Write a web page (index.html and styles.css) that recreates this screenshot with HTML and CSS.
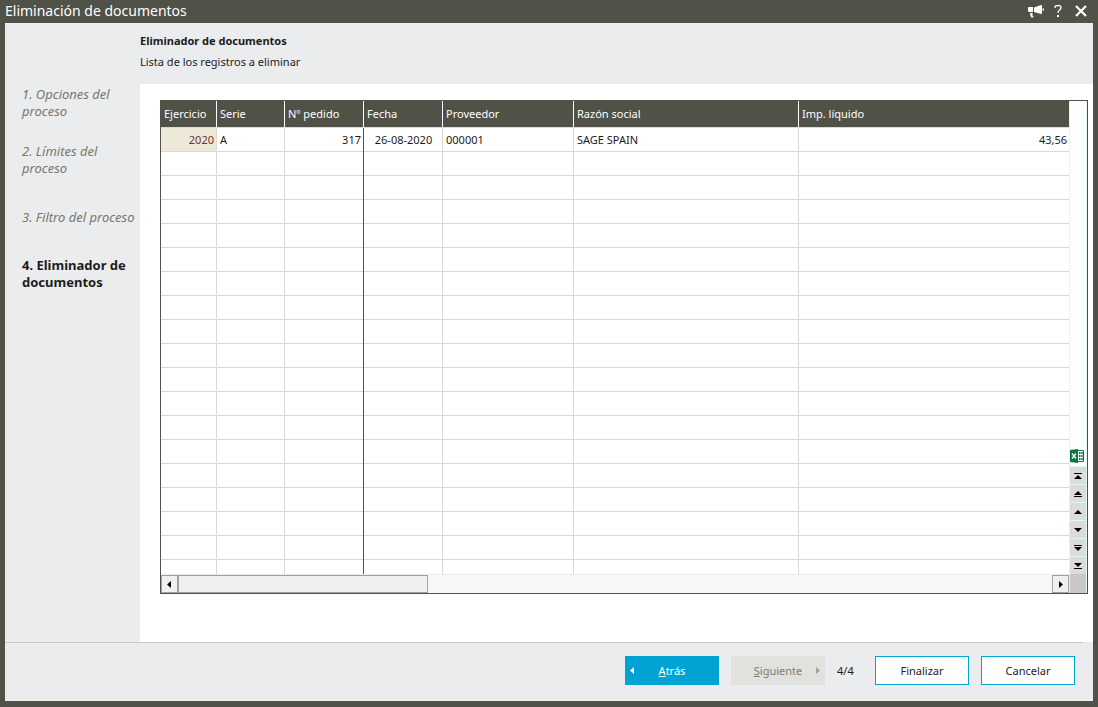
FILE: index.html
```html
<!DOCTYPE html>
<html lang="es">
<head>
<meta charset="utf-8">
<title>Eliminación de documentos</title>
<link rel="stylesheet" href="styles.css">
</head>
<body>
<div class="window">
  <header class="titlebar">
    <h1 class="titlebar-text">Eliminación de documentos</h1>
    <div class="titlebar-tools">
      <button class="tool" type="button" aria-label="Avisos"><svg width="18" height="16" viewBox="0 0 18 16" fill="#fff"><path d="M1.500 4H6v5H1.500L1 8V5zM7 4.500L14 2l1 .5v8l-1 .5-7-2zM15.500 5.500h1.500v2h-1.500zM3 10h2.500v2.500l1 1-.5 1H4.500L3.500 13z"/></svg></button>
      <button class="tool" type="button" aria-label="Ayuda"><svg width="10" height="14" viewBox="0 0 10 14" fill="none" stroke="#fff" stroke-width="1.300"><path d="M2 4V3q0-1.500 3-1.500t3 2q0 1.500-1.500 2.500T5 9"/><path d="M5 11v2" stroke-width="2"/></svg></button>
      <button class="tool" type="button" aria-label="Cerrar"><svg width="12" height="12" viewBox="0 0 12 12" stroke="#fff" stroke-width="2.200"><path d="M1 1l10 10M11 1L1 11"/></svg></button>
    </div>
  </header>
  <div class="wizard">
    <nav class="steps">
      <ol class="step-list">
        <li class="step">1. Opciones del proceso</li>
        <li class="step">2. Límites del proceso</li>
        <li class="step">3. Filtro del proceso</li>
        <li class="step step-current">4. Eliminador de documentos</li>
      </ol>
    </nav>
    <main class="page">
      <div class="page-head">
        <h2 class="page-title">Eliminador de documentos</h2>
        <p class="page-subtitle">Lista de los registros a eliminar</p>
      </div>
      <div class="page-body">
        <div class="grid">
          <div class="grid-main">
            <div class="grid-rows">
              <table class="records">
                <colgroup><col class="c-year"><col class="c-series"><col class="c-order"><col class="c-date"><col class="c-vendor"><col class="c-name"><col></colgroup>
                <thead><tr><th>Ejercicio</th><th>Serie</th><th>Nº pedido</th><th>Fecha</th><th>Proveedor</th><th>Razón social</th><th>Imp. líquido</th></tr></thead>
                <tbody>
                  <tr><td class="num selected">2020</td><td>A</td><td class="num">317</td><td class="center">26-08-2020</td><td>000001</td><td>SAGE SPAIN</td><td class="num">43,56</td></tr>
                  <tr><td></td><td></td><td></td><td></td><td></td><td></td><td></td></tr>
                  <tr><td></td><td></td><td></td><td></td><td></td><td></td><td></td></tr>
                  <tr><td></td><td></td><td></td><td></td><td></td><td></td><td></td></tr>
                  <tr><td></td><td></td><td></td><td></td><td></td><td></td><td></td></tr>
                  <tr><td></td><td></td><td></td><td></td><td></td><td></td><td></td></tr>
                  <tr><td></td><td></td><td></td><td></td><td></td><td></td><td></td></tr>
                  <tr><td></td><td></td><td></td><td></td><td></td><td></td><td></td></tr>
                  <tr><td></td><td></td><td></td><td></td><td></td><td></td><td></td></tr>
                  <tr><td></td><td></td><td></td><td></td><td></td><td></td><td></td></tr>
                  <tr><td></td><td></td><td></td><td></td><td></td><td></td><td></td></tr>
                  <tr><td></td><td></td><td></td><td></td><td></td><td></td><td></td></tr>
                  <tr><td></td><td></td><td></td><td></td><td></td><td></td><td></td></tr>
                  <tr><td></td><td></td><td></td><td></td><td></td><td></td><td></td></tr>
                  <tr><td></td><td></td><td></td><td></td><td></td><td></td><td></td></tr>
                  <tr><td></td><td></td><td></td><td></td><td></td><td></td><td></td></tr>
                  <tr><td></td><td></td><td></td><td></td><td></td><td></td><td></td></tr>
                  <tr><td></td><td></td><td></td><td></td><td></td><td></td><td></td></tr>
                  <tr><td></td><td></td><td></td><td></td><td></td><td></td><td></td></tr>
                </tbody>
              </table>
            </div>
            <div class="hscroll">
              <button class="scroll-end" type="button" aria-label="Desplazar a la izquierda"><svg width="6" height="7" viewBox="0 0 6 7"><path d="M4 0v7L0 3.500z"/></svg></button>
              <div class="scroll-track"><div class="scroll-thumb"></div></div>
              <button class="scroll-end" type="button" aria-label="Desplazar a la derecha"><svg width="4" height="7" viewBox="0 0 4 7"><path d="M0 0v7l4-3.500z"/></svg></button>
            </div>
          </div>
          <div class="grid-side">
            <button class="excel" type="button" aria-label="Exportar a Excel"><svg width="14" height="14" viewBox="0 0 14 14"><path fill="#fff" stroke="#0b7544" d="M7.500 1.500h6v11h-6z"/><path fill="#0b7544" d="M0 1l8-1v14l-8-1zM9 3h1.500v2H9zM11.200 3h1.500v2h-1.500zM9 6h1.500v2H9zM11.200 6h1.500v2h-1.500zM9 9h1.500v2H9zM11.200 9h1.500v2h-1.500z"/><path stroke="#fff" stroke-width="1.300" d="M2 4.500l4 5M6 4.500l-4 5"/></svg></button>
            <button class="nav" type="button" aria-label="Primer registro"><svg width="8" height="8" viewBox="0 0 8 8"><path d="M0 1h8v1H0zM4 3l4 4H0z"/></svg></button>
            <button class="nav" type="button" aria-label="Página anterior"><svg width="8" height="8" viewBox="0 0 8 8"><path d="M4 1l4 4H0zM0 6h8v1H0z"/></svg></button>
            <button class="nav" type="button" aria-label="Registro anterior"><svg width="8" height="8" viewBox="0 0 8 8"><path d="M4 2l4 4H0z"/></svg></button>
            <button class="nav" type="button" aria-label="Registro siguiente"><svg width="8" height="8" viewBox="0 0 8 8"><path d="M0 2h8L4 6z"/></svg></button>
            <button class="nav" type="button" aria-label="Página siguiente"><svg width="8" height="8" viewBox="0 0 8 8"><path d="M0 1h8v1H0zM0 3h8L4 7z"/></svg></button>
            <button class="nav" type="button" aria-label="Último registro"><svg width="8" height="8" viewBox="0 0 8 8"><path d="M0 1h8L4 5zM0 6h8v1H0z"/></svg></button>
            <div class="corner"></div>
          </div>
        </div>
      </div>
    </main>
  </div>
  <footer class="actions">
    <button class="btn btn-back" type="button"><svg class="arrow" width="4" height="7" viewBox="0 0 4 7" fill="#fff"><path d="M4 0v7L0 3.500z"/></svg><span class="btn-label"><u>A</u>trás</span></button>
    <button class="btn btn-next" type="button" disabled><span class="btn-label"><u>S</u>iguiente</span><svg class="arrow" width="4" height="7" viewBox="0 0 4 7" fill="#a0a09c"><path d="M0 0v7l4-3.500z"/></svg></button>
    <span class="counter">4/4</span>
    <button class="btn btn-plain" type="button">Finalizar</button>
    <button class="btn btn-plain" type="button">Cancelar</button>
  </footer>
</div>
</body>
</html>
```
FILE: styles.css
```css
* {
  box-sizing: border-box;
}

body {
  margin: 0;
  font: 11px/17px "Noto Sans", "Open Sans", sans-serif;
  color: #1c1c1c;
}

button {
  font: inherit;
  margin: 0;
  padding: 0;
  border: 0;
  border-radius: 0;
}

.window {
  display: flex;
  flex-direction: column;
  height: 100vh;
  padding: 0 5px 6px;
  background: #505147;
}

.titlebar {
  display: flex;
  flex: none;
  align-items: center;
  justify-content: space-between;
  height: 23px;
  padding: 0 6px 2px 0;
  color: #fff;
}

.titlebar-text {
  margin: 0;
  font-size: 14px;
  font-weight: 400;
  line-height: 20px;
}

.titlebar-tools {
  display: flex;
  align-items: center;
  gap: 8px;
}

.tool {
  display: flex;
  background: transparent;
}

.tool:last-child {
  padding-left: 4px;
}

.wizard {
  display: flex;
  flex: 1;
  min-height: 0;
  background: #ebecee;
}

.steps {
  flex: none;
  width: 135px;
  padding: 63px 0 0 17px;
}

.step-list {
  display: flex;
  flex-direction: column;
  margin: 0;
  padding: 0;
  list-style: none;
}

.step {
  min-height: 48px;
  margin-bottom: 9px;
  padding-right: 8px;
  font-size: 13px;
  font-style: italic;
  color: #77776f;
}

.step:nth-child(2) {
  margin-bottom: 18px;
}

.step:nth-child(3) {
  margin-bottom: 0;
  padding-right: 0;
}

.step-current {
  font-style: normal;
  font-weight: 700;
  color: #1c1c1c;
}

.page {
  display: flex;
  flex: 1;
  flex-direction: column;
  min-width: 0;
}

.page-head {
  flex: none;
  height: 61px;
  padding-top: 9px;
}

.page-title,
.page-subtitle {
  margin: 0 0 4px;
  font-size: 11px;
}

.page-body {
  display: flex;
  flex: 1;
  min-height: 0;
  padding: 16px 5px 48px 20px;
  background: #fff;
}

.grid {
  display: flex;
  flex: 1;
  min-width: 0;
  border: 1px solid #505147;
}

.grid-main {
  display: flex;
  flex: 1;
  flex-direction: column;
  min-width: 0;
}

.grid-rows {
  flex: 1;
  min-height: 0;
  overflow: hidden;
}

.records {
  width: 100%;
  border-spacing: 0;
  table-layout: fixed;
}

.c-year {
  width: 56px;
}

.c-series {
  width: 68px;
}

.c-order,
.c-date {
  width: 79px;
}

.c-vendor {
  width: 131px;
}

.c-name {
  width: 225px;
}

.records th,
.records td {
  padding: 0 2px 0 3px;
  border-right: 1px solid #d9d9d9;
  border-bottom: 1px solid #d9d9d9;
  text-align: left;
  white-space: nowrap;
}

.records th {
  height: 27px;
  padding-bottom: 2px;
  border-right-color: #fff;
  background: #505147;
  color: #fff;
  font-weight: 400;
}

.records td {
  height: 24px;
}

.records th:last-child,
.records td:last-child {
  border-right: 0;
}

.records td:nth-child(4) {
  box-shadow: -1px 0 0 #505147;
}

.records .num {
  text-align: right;
}

.records .center {
  text-align: center;
}

.records .selected {
  background: #ece9d8;
  color: #70302a;
}

.hscroll {
  display: flex;
  flex: none;
  height: 19px;
  border-top: 1px solid #ebebeb;
}

.scroll-end {
  display: flex;
  flex: none;
  align-items: center;
  justify-content: center;
  width: 17px;
  border: 1px solid #a0a0a0;
  background: #f0f0f0;
}

.scroll-track {
  flex: 1;
  background: repeating-conic-gradient(#f0f0f0 0 25%, #fff 0 50%) 0 0 / 2px 2px;
}

.scroll-thumb {
  width: 250px;
  height: 100%;
  border: 1px solid #a0a0a0;
  background: #f0f0f0;
}

.grid-side {
  display: flex;
  flex: none;
  flex-direction: column;
  justify-content: flex-end;
  width: 18px;
  border-left: 1px solid #e0f4f4;
  border-right: 1px solid #e0f4f4;
}

.excel {
  display: flex;
  flex: none;
  align-items: center;
  height: 20px;
  background: transparent;
}

.nav {
  display: flex;
  flex: none;
  align-items: center;
  justify-content: center;
  height: 18px;
  border-top: 1px solid #e0f8f8;
  background: #dcdcda;
}

.corner {
  flex: none;
  height: 19px;
  background: #c8c8c8;
}

.actions {
  display: flex;
  flex: none;
  gap: 12px;
  align-items: flex-start;
  justify-content: flex-end;
  height: 59px;
  padding: 14px 18px 0 0;
  background: linear-gradient(#c8c8c8, #c8c8c8) 0 0 / calc(100% - 10px) 1px no-repeat #ebecee;
}

.btn {
  display: flex;
  align-items: center;
  justify-content: center;
  width: 94px;
  height: 29px;
}

.btn-label {
  flex: 1;
  text-align: center;
}

.btn-back {
  padding: 0 9px 0 5px;
  background: #00a3d3;
  color: #fff;
}

.btn-next {
  padding: 0 5px 0 9px;
  background: #e1e1dd;
  color: #7c7c76;
}

.btn-plain {
  border: 1px solid #00a3d3;
  background: #fff;
  color: #1c1c1c;
}

.counter {
  width: 26px;
  line-height: 29px;
}
```
